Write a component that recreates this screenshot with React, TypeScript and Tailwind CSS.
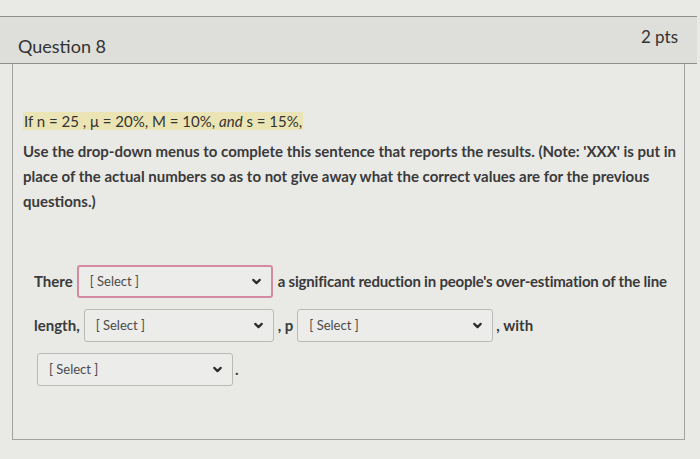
import { ChevronDown } from 'lucide-react';

function Dropdown({ width, focused }: { width: string; focused?: boolean }) {
  return (
    <span
      className={`inline-flex shrink-0 items-center justify-between h-[33px] ${width} rounded-[3px] bg-[#ececea] pl-[11px] pr-[8px] align-middle ${
        focused ? 'border-2 border-[#d48aa3]' : 'border border-[#b9b9b6]'
      }`}
    >
      <span className="text-[13px] font-normal text-[#4a4a4a]">[ Select ]</span>
      <ChevronDown className="w-[13px] h-[13px] text-[#2d2d2d]" strokeWidth={4} />
    </span>
  );
}

export default function App() {
  return (
    <div className="w-[700px] h-[459px] overflow-hidden bg-[#e9e9e6] font-['Lato','Liberation_Sans',sans-serif] text-[#2d3b45]">
      <div className="h-[16px]" />
      <div className="mr-[3px] h-[48px] flex justify-between bg-[#dededb] border-y border-[#8f8f8c] pl-[18px] pr-[19px]">
        <h2 className="mt-[20px] text-[18px] text-[#333] leading-none">Question 8</h2>
        <span className="mt-[11px] text-[17px] text-[#333] leading-none">2 pts</span>
      </div>
      <div className="ml-[12px] mr-[15px] h-[376px] border-x border-b border-[#a2a2a0] pl-[10px] pr-[2px] pt-[46px] text-[#333]">
        <p className="text-[15px] leading-[22px]">
          <span className="bg-[#ebe4b4] px-[1px]">
            If n = 25 , μ = 20%, M = 10%, <i>and</i> s = 15%,
          </span>
        </p>
        <p className="mt-[7px] text-[15px] leading-[25px] font-bold text-[#3a3a3a]">
          Use the drop-down menus to complete this sentence that reports the results. (Note: 'XXX' is put in place
          of the actual numbers so as to not give away what the correct values are for the previous questions.)
        </p>
        <div className="mt-[45px] pl-[11px] text-[15px] font-bold text-[#3a3a3a] leading-[44px] whitespace-nowrap">
          <div className="flex items-center gap-[4px]">
            <span>There</span>
            <Dropdown width="w-[196px]" focused />
            <span className="ml-[1px] tracking-[-0.2px]">a significant reduction in people's over-estimation of the line</span>
          </div>
          <div className="flex items-center">
            <span className="mr-[4px]">length,</span>
            <Dropdown width="w-[190px]" />
            <span className="mx-[4px]">, p</span>
            <Dropdown width="w-[196px]" />
            <span className="ml-[3px]">, with</span>
          </div>
          <div className="flex items-center pl-[3px]">
            <Dropdown width="w-[196px]" />
            <span className="ml-[2px]">.</span>
          </div>
        </div>
      </div>
    </div>
  );
}
